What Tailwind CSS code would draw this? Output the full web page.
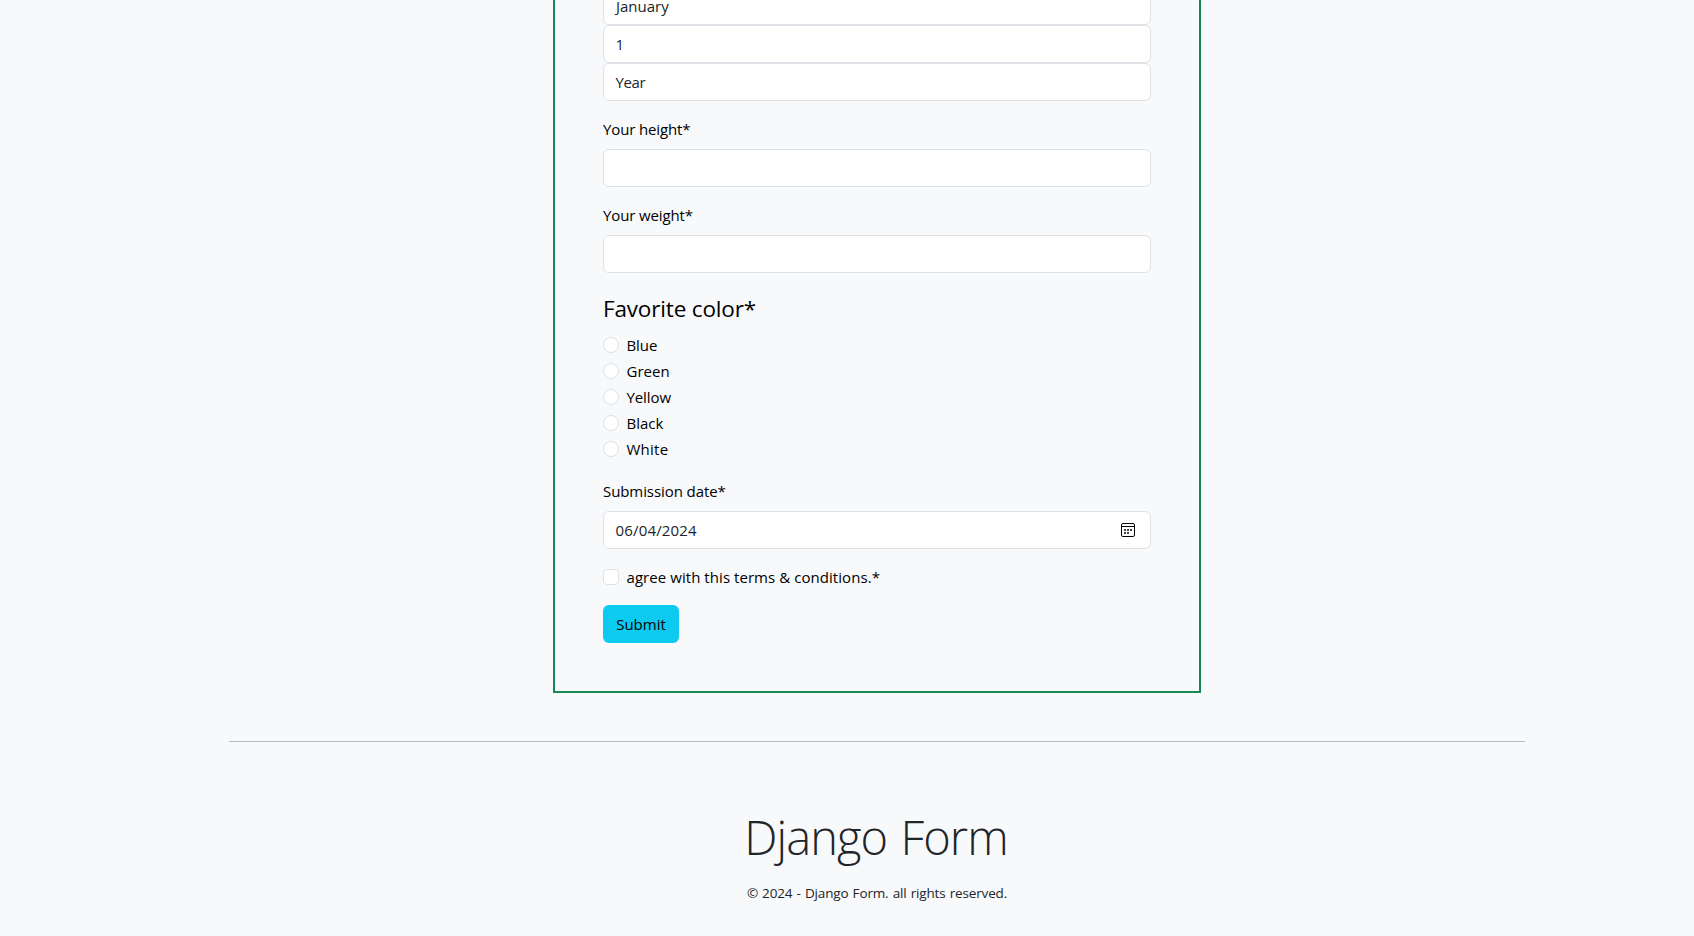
<!DOCTYPE html>
<html lang="en">
<head>
<meta charset="utf-8">
<title>Django Form</title>
<script src="https://cdn.jsdelivr.net/npm/@tailwindcss/browser@4"></script>
</head>
<body class="h-[936px] overflow-hidden bg-[#f8f9fb] pl-[60px] font-['Open_Sans','Noto_Sans',sans-serif] text-[15px] leading-6 text-black">
<main class="mx-auto w-[1296px] border-b border-[#babcbd] pb-12">
  <form class="mx-auto -mt-[13px] flex w-[648px] flex-col items-stretch gap-4 border-x-2 border-b-2 border-[#198754] px-12 pb-12">
    <div class="flex flex-col text-[#212529]">
      <div class="h-[38px] rounded-md border border-[#dee2e6] bg-white px-3 py-1.5">January</div>
      <div class="h-[38px] rounded-md border border-[#dee2e6] bg-white px-[11.5px] py-1.5">1</div>
      <div class="h-[38px] rounded-md border border-[#dee2e6] bg-white px-[11.5px] py-1.5 tracking-[-0.4px]">Year</div>
    </div>
    <div class="flex flex-col gap-2">
      <label for="height" class="tracking-[-0.14px]">Your height*</label>
      <input id="height" class="h-[38px] rounded-md border border-[#dee2e6] bg-white px-3">
    </div>
    <div class="flex flex-col gap-2">
      <label for="weight" class="tracking-[-0.12px]">Your weight*</label>
      <input id="weight" class="h-[38px] rounded-md border border-[#dee2e6] bg-white px-3">
    </div>
    <div class="flex flex-col">
      <div class="mb-1.5 pt-0.5 text-[22.5px] leading-9 tracking-[-0.16px]">Favorite color*</div>
      <div class="flex flex-col gap-0.5 pb-0.5">
        <label class="flex h-6 gap-[7.5px]"><span class="mt-1 size-4 rounded-full border border-[#dee2e6] bg-white"></span><span class="tracking-[-0.1px]">Blue</span></label>
        <label class="flex h-6 gap-[7.5px]"><span class="mt-1 size-4 rounded-full border border-[#dee2e6] bg-white"></span><span>Green</span></label>
        <label class="flex h-6 gap-[7.5px]"><span class="mt-1 size-4 rounded-full border border-[#dee2e6] bg-white"></span><span class="tracking-[-0.1px]">Yellow</span></label>
        <label class="flex h-6 gap-[7.5px]"><span class="mt-1 size-4 rounded-full border border-[#dee2e6] bg-white"></span><span>Black</span></label>
        <label class="flex h-6 gap-[7.5px]"><span class="mt-1 size-4 rounded-full border border-[#dee2e6] bg-white"></span><span class="tracking-[0.25px]">White</span></label>
      </div>
    </div>
    <div class="flex flex-col gap-2">
      <div class="tracking-[-0.08px]">Submission date*</div>
      <div class="flex h-[38px] items-center justify-between rounded-md border border-[#dee2e6] bg-white pr-[15px] pl-[11.5px] text-[#212529]">
        <span class="tracking-[0.17px]">06/04/2024</span>
        <svg class="h-[14px] w-[14px]" viewBox="0 0 14 14" fill="none">
          <rect x=".5" y=".5" width="13" height="13" rx="1.5" stroke="#000"/>
          <path d="M1 3.5h12" stroke="#000"/>
          <path d="M3 6h2v2H3zM6 6h2v2H6zM9 6h2v2H9zM3 9h2v2H3zM6 9h2v2H6z" fill="#444"/>
        </svg>
      </div>
    </div>
    <label class="flex h-6 gap-[7.5px]"><span class="mt-1 size-4 rounded-[4px] border border-[#dee2e6] bg-white"></span><span class="tracking-[0.06px]">agree with this terms &amp; conditions.*</span></label>
    <button type="button" class="h-[38px] w-[76px] rounded-md bg-[#0dcaf0]">Submit</button>
  </form>
</main>
<footer class="mt-[66px] flex flex-col items-center text-[#212529]">
  <div class="pr-0.5 text-[47px] leading-[58px] font-light tracking-[-0.9px] [word-spacing:2px]">Django Form</div>
  <div class="mt-[17px] text-[13.5px] leading-[21px] tracking-[-0.15px] [word-spacing:0.8px]">© 2024 - Django Form. all rights reserved.</div>
</footer>
</body>
</html>
